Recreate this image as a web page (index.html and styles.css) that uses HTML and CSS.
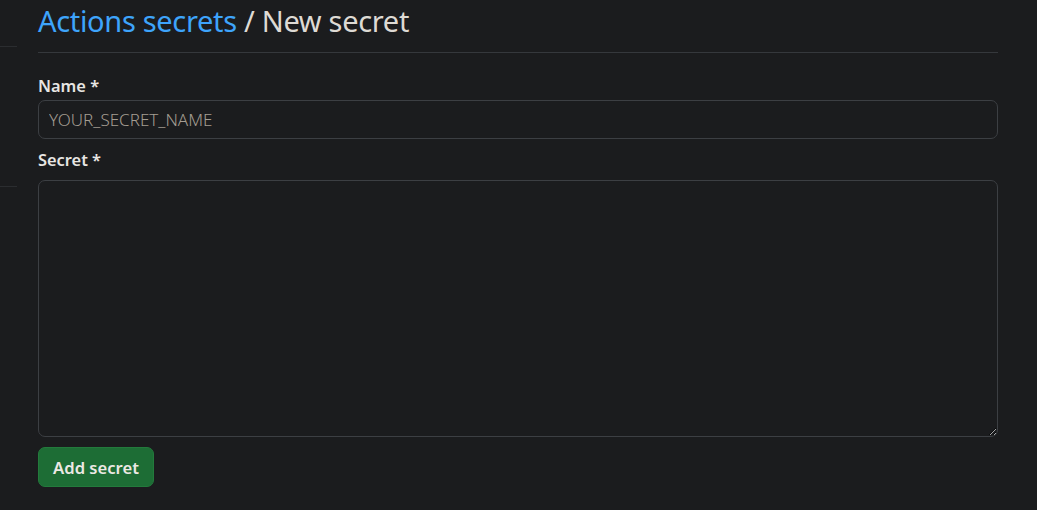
FILE: index.html
```html
<!DOCTYPE html>
<html lang="en">
<head>
<meta charset="utf-8">
<title>New secret</title>
<link rel="stylesheet" href="styles.css">
</head>
<body>
<div class="layout">
  <aside class="sidebar">
    <div class="side-block side-top"></div>
    <div class="side-block side-mid"></div>
  </aside>
  <main class="main">
    <div class="subhead">
      <h2 class="subhead-heading"><a class="crumb" href="#">Actions secrets</a> / New secret</h2>
    </div>
    <form class="form">
      <label class="label label-name" for="name">Name *</label>
      <input class="input" id="name" type="text" placeholder="YOUR_SECRET_NAME">
      <label class="label label-secret" for="secret">Secret *</label>
      <textarea class="textarea" id="secret"></textarea>
      <button class="btn" type="button">Add secret</button>
    </form>
  </main>
</div>
</body>
</html>
```
FILE: styles.css
```css
html, body {
  margin: 0;
  padding: 0;
  background: #1b1c1e;
  color: #e8e6e3;
  font-family: "Noto Sans", "Open Sans", sans-serif;
  color-scheme: dark;
}
.layout {
  display: grid;
  grid-template-columns: 17px 960px;
  column-gap: 21px;
}
.sidebar {
  display: flex;
  flex-direction: column;
}
.side-block {
  border-bottom: 1px solid #2b2d30;
}
.side-top { height: 46px; }
.side-mid { height: 139px; }
.main {
  display: flex;
  flex-direction: column;
}
.subhead {
  height: 52px;
  border-bottom: 1px solid #35383c;
  box-sizing: content-box;
}
.subhead-heading {
  margin: 0;
  font-size: 29px;
  line-height: 41px;
  letter-spacing: -0.32px;
  font-weight: 400;
  color: #dedad4;
  white-space: nowrap;
}
.crumb {
  color: #3ea4fb;
  text-decoration: none;
}
.form {
  display: flex;
  flex-direction: column;
  align-items: flex-start;
}
.label {
  font-size: 16.4px;
  line-height: 22px;
  font-weight: 600;
  color: #e8e6e3;
}
.label-name { margin-top: 22px; margin-bottom: 3px; }
.label-secret { margin-top: 10px; margin-bottom: 9px; }
.input {
  box-sizing: border-box;
  width: 960px;
  height: 39px;
  margin: 0;
  padding: 0 10px;
  background: #1b1c1e;
  border: 1px solid #3c3f43;
  border-radius: 7px;
  color: #e8e6e3;
  font-family: inherit;
  font-size: 17px;
  outline: none;
}
.input::placeholder {
  color: #a49d92;
  font-weight: 300;
}
.textarea {
  box-sizing: border-box;
  width: 960px;
  height: 257px;
  margin: 0;
  padding: 8px 10px;
  background: #1b1c1e;
  border: 1px solid #3c3f43;
  border-radius: 7px;
  color: #e8e6e3;
  font-family: inherit;
  font-size: 17px;
  resize: vertical;
  outline: none;
}
.btn {
  margin-top: 10px;
  width: 116px;
  height: 40px;
  box-sizing: border-box;
  background: #1d6d35;
  border: 1px solid #237a3c;
  border-radius: 7px;
  color: #ece9e4;
  font-family: inherit;
  font-size: 16.6px;
  font-weight: 600;
  padding: 0;
  cursor: pointer;
}
```
